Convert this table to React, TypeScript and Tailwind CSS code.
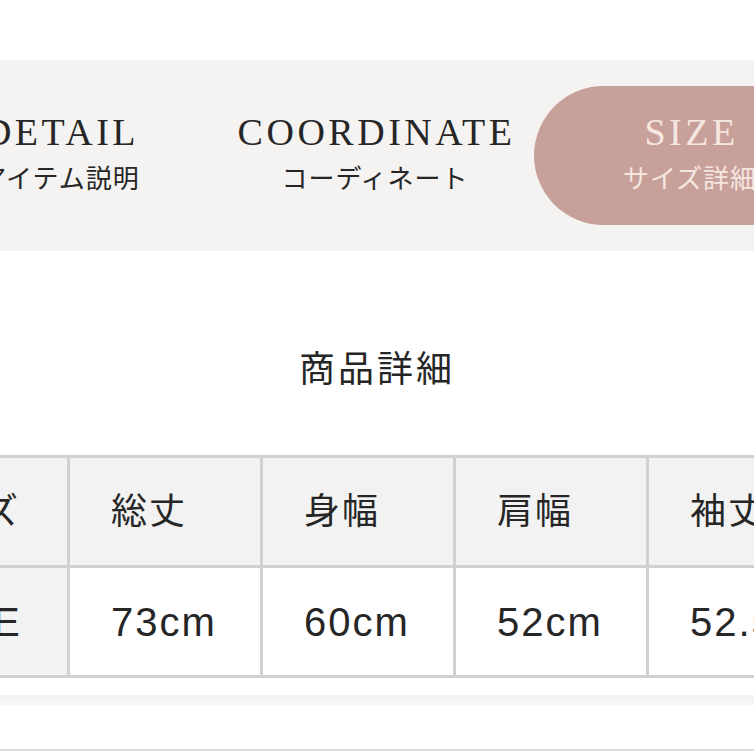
const TABS = [
  { en: 'DETAIL', ja: 'アイテム説明', active: false },
  { en: 'COORDINATE', ja: 'コーディネート', active: false },
  { en: 'SIZE', ja: 'サイズ詳細', active: true },
];

const HEAD = ['サイズ', '総丈', '身幅', '肩幅', '袖丈'];
const BODY = ['FREE', '73cm', '60cm', '52cm', '52.5cm'];

const serif = { fontFamily: '"Liberation Serif", "Times New Roman", serif' };

export default function App() {
  return (
    <div className="w-[754px] h-[754px] overflow-hidden bg-white text-[#2b2b2b] font-['Noto_Sans_CJK_JP',sans-serif]">
      <div className="h-[60px]" />

      {/* Tabs */}
      <div className="h-[191px] bg-[#f5f3f1] flex items-center overflow-hidden">
        <div className="flex gap-[3px] -ml-[96px] shrink-0">
          {TABS.map((t) => (
            <div
              key={t.en}
              className={`w-[312px] h-[139px] shrink-0 rounded-full flex flex-col items-center justify-center pb-[8px] ${
                t.active ? 'bg-[#c8a09a] text-[#f6e6e0]' : 'text-[#262626]'
              }`}
            >
              <div style={serif} className="text-[38px] leading-none tracking-[3.5px] pl-[3px]">
                {t.en}
              </div>
              <div className="mt-[13px] text-[26px] leading-none tracking-[1px] font-['Noto_Sans_CJK_JP',sans-serif]">
                {t.ja}
              </div>
            </div>
          ))}
        </div>
      </div>

      {/* Title */}
      <h2 className="mt-[97px] text-center text-[36px] leading-none tracking-[3px] text-[#262626] font-['Noto_Sans_CJK_JP',sans-serif]">
        商品詳細
      </h2>

      {/* Size table */}
      <div className="mt-[71px] overflow-hidden">
        <table className="-ml-[126px] border-collapse font-['Liberation_Sans','Noto_Sans_CJK_JP',sans-serif] text-[#262626]">
          <tbody>
            <tr className="bg-[#f2f2f2]">
              {HEAD.map((h, i) => (
                <td
                  key={h}
                  className={`w-[193px] min-w-[193px] h-[110px] border-[3px] border-[#d0d0d0] text-left align-middle text-[36px] leading-none tracking-[2px] ${
                    i === 0 ? 'pl-[30px]' : 'pl-[41px]'
                  }`}
                >
                  {h}
                </td>
              ))}
            </tr>
            <tr>
              {BODY.map((b, i) => (
                <td
                  key={b}
                  className={`w-[193px] min-w-[193px] h-[110px] border-[3px] border-[#d0d0d0] text-left align-middle text-[40px] leading-none tracking-[2px] whitespace-nowrap ${
                    i === 0 ? 'pl-[30px] bg-[#f2f2f2]' : 'pl-[41px] bg-white'
                  }`}
                >
                  {b}
                </td>
              ))}
            </tr>
          </tbody>
        </table>
      </div>

      {/* Bottom strips */}
      <div className="mt-[17px] h-[10px] bg-gradient-to-b from-[#f1f1f1] to-[#f7f7f7]" />
      <div className="h-[46px] border-b-2 border-[#dcdcdc]" />
    </div>
  );
}
